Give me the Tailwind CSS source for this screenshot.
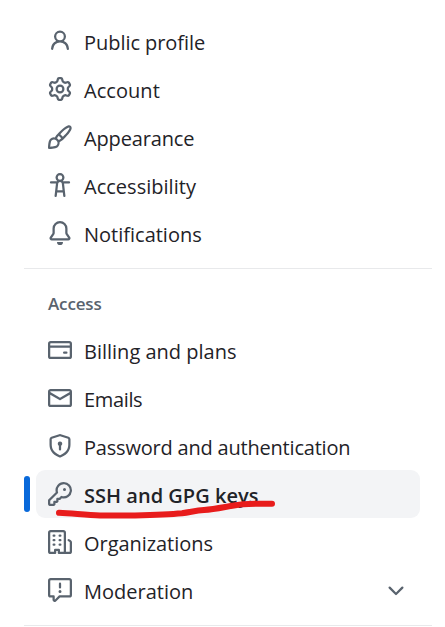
<!DOCTYPE html>
<html lang="en">
<head>
<meta charset="utf-8">
<title>Settings</title>
<script src="https://cdn.jsdelivr.net/npm/@tailwindcss/browser@4"></script>
</head>
<body class="w-[445px] h-[627px] overflow-hidden bg-white font-['Open_Sans','Noto_Sans',sans-serif] text-[20px] leading-[30px] text-[#1f2328]">
<nav class="pt-[17px] pl-6 pr-[13px]">
  <ul class="ml-3 mr-3 whitespace-nowrap">
    <li class="flex h-12 items-center gap-3 px-3"><svg class="size-6 shrink-0 fill-[#59636e]" viewBox="0 0 16 16"><path d="M10.561 8.073a6 6 0 0 1 3.432 5.142.75.75 0 1 1-1.498.07 4.5 4.5 0 0 0-8.99 0 .75.75 0 0 1-1.498-.07 6.004 6.004 0 0 1 3.431-5.142 3.999 3.999 0 1 1 5.123 0ZM10.5 5a2.5 2.5 0 1 0-5 0 2.5 2.5 0 0 0 5 0Z"/></svg><span class="pt-1 tracking-[-0.05px]">Public profile</span></li>
    <li class="flex h-12 items-center gap-3 px-3"><svg class="size-6 shrink-0 fill-[#59636e]" viewBox="0 0 16 16"><path d="M8 0a8.2 8.2 0 0 1 .701.031C9.444.095 9.99.645 10.16 1.29l.288 1.107c.018.066.079.158.212.224.231.114.454.243.668.386.123.082.233.09.299.071l1.103-.303c.644-.176 1.392.021 1.82.63.27.385.506.792.704 1.218.315.675.111 1.422-.364 1.891l-.814.806c-.049.048-.098.147-.088.294.016.257.016.515 0 .772-.01.147.038.246.088.294l.814.806c.475.469.679 1.216.364 1.891a7.977 7.977 0 0 1-.704 1.217c-.428.61-1.176.807-1.82.63l-1.102-.302c-.067-.019-.177-.011-.3.071a5.909 5.909 0 0 1-.668.386c-.133.066-.194.158-.211.224l-.29 1.106c-.168.646-.715 1.196-1.458 1.26a8.006 8.006 0 0 1-1.402 0c-.743-.064-1.289-.614-1.458-1.26l-.289-1.106c-.018-.066-.079-.158-.212-.224a5.738 5.738 0 0 1-.668-.386c-.123-.082-.233-.09-.299-.071l-1.103.303c-.644.176-1.392-.021-1.82-.63a8.12 8.12 0 0 1-.704-1.218c-.315-.675-.111-1.422.363-1.891l.815-.806c.05-.048.098-.147.088-.294a6.214 6.214 0 0 1 0-.772c.01-.147-.038-.246-.088-.294l-.815-.806C.635 6.045.431 5.298.746 4.623a7.92 7.92 0 0 1 .704-1.217c.428-.61 1.176-.807 1.82-.63l1.102.302c.067.019.177.011.3-.071.214-.143.437-.272.668-.386.133-.066.194-.158.211-.224l.29-1.106C6.009.645 6.556.095 7.299.03 7.53.01 7.764 0 8 0Zm-.571 1.525c-.036.003-.108.036-.137.146l-.289 1.105c-.147.561-.549.967-.998 1.189-.173.086-.34.183-.5.29-.417.278-.97.423-1.529.27l-1.103-.303c-.109-.03-.175.016-.195.045-.22.312-.412.644-.573.99-.014.031-.021.11.059.19l.815.806c.411.406.562.957.53 1.456a4.709 4.709 0 0 0 0 .582c.032.499-.119 1.05-.53 1.456l-.815.806c-.081.08-.073.159-.059.19.162.346.353.677.573.989.02.03.085.076.195.046l1.102-.303c.56-.153 1.113-.008 1.53.27.161.107.328.204.501.29.447.222.85.629.997 1.189l.289 1.105c.029.109.101.143.137.146a6.6 6.6 0 0 0 1.142 0c.036-.003.108-.036.137-.146l.289-1.105c.147-.561.549-.967.998-1.189.173-.086.34-.183.5-.29.417-.278.97-.423 1.529-.27l1.103.303c.109.029.175-.016.195-.045.22-.313.411-.644.573-.99.014-.031.021-.11-.059-.19l-.815-.806c-.411-.406-.562-.957-.53-1.456a4.709 4.709 0 0 0 0-.582c-.032-.499.119-1.05.53-1.456l.815-.806c.081-.08.073-.159.059-.19a6.464 6.464 0 0 0-.573-.989c-.02-.03-.085-.076-.195-.046l-1.102.303c-.56.153-1.113.008-1.53-.27a4.44 4.44 0 0 0-.501-.29c-.447-.222-.85-.629-.997-1.189l-.289-1.105c-.029-.11-.101-.143-.137-.146a6.6 6.6 0 0 0-1.142 0ZM11 8a3 3 0 1 1-6 0 3 3 0 0 1 6 0ZM9.5 8a1.5 1.5 0 1 0-3.001.001A1.5 1.5 0 0 0 9.5 8Z"/></svg><span class="pt-1 tracking-[0.05px]">Account</span></li>
    <li class="flex h-12 items-center gap-3 px-3"><svg class="size-6 shrink-0 fill-[#59636e]" viewBox="0 0 16 16"><path d="M11.134 1.535c.7-.509 1.416-.942 2.076-1.155.649-.21 1.463-.267 2.069.34.603.601.568 1.411.368 2.07-.202.668-.624 1.39-1.125 2.096-1.011 1.424-2.496 2.987-3.775 4.249-1.098 1.084-2.132 1.839-3.04 2.3a3.744 3.744 0 0 1-1.055 3.217c-.431.431-1.065.691-1.657.861-.614.177-1.294.287-1.914.357A21.151 21.151 0 0 1 .797 16H.743l.007-.75H.749L.742 16a.75.75 0 0 1-.743-.742l.743-.008-.742.007v-.054a21.25 21.25 0 0 1 .13-2.284c.067-.647.187-1.287.358-1.914.17-.591.43-1.226.86-1.657a3.746 3.746 0 0 1 3.227-1.054c.466-.893 1.225-1.907 2.314-2.982 1.271-1.255 2.833-2.75 4.245-3.777ZM1.62 13.089c-.051.464-.086.929-.104 1.395.466-.018.932-.053 1.396-.104a10.511 10.511 0 0 0 1.668-.309c.526-.151.856-.325 1.011-.48a2.25 2.25 0 1 0-3.182-3.182c-.155.155-.329.485-.48 1.01a10.515 10.515 0 0 0-.309 1.67Zm10.396-10.34c-1.224.89-2.605 2.189-3.822 3.384l1.718 1.718c1.21-1.205 2.51-2.597 3.387-3.833.47-.662.78-1.227.912-1.662.134-.444.032-.551.009-.575h-.001V1.78c-.014-.014-.113-.113-.548.027-.432.14-.995.462-1.655.942Zm-4.832 7.266-.001.001a9.859 9.859 0 0 0 1.63-1.142L7.155 7.216a9.7 9.7 0 0 0-1.161 1.607c.482.302.889.71 1.19 1.192Z"/></svg><span class="pt-1 tracking-[-0.15px]">Appearance</span></li>
    <li class="flex h-12 items-center gap-3 px-3"><svg class="size-6 shrink-0 fill-[#59636e]" viewBox="0 0 16 16"><path d="M9.923 5.302c.063.063.122.129.178.198H14A.75.75 0 0 1 14 7h-3.3l.578 5.163.362 2.997a.75.75 0 0 1-1.49.18L9.868 13H6.132l-.282 2.34a.75.75 0 0 1-1.49-.18l.362-2.997L5.3 7H2a.75.75 0 0 1 0-1.5h3.9a2.54 2.54 0 0 1 .176-.198 3 3 0 1 1 3.847 0ZM9.2 7.073h-.001a1.206 1.206 0 0 0-2.398 0L6.305 11.5h3.39ZM9.5 3a1.5 1.5 0 1 0-3.001.001A1.5 1.5 0 0 0 9.5 3Z"/></svg><span class="pt-1 tracking-[0.02px]">Accessibility</span></li>
    <li class="flex h-12 items-center gap-3 px-3"><svg class="size-6 shrink-0 fill-[#59636e]" viewBox="0 0 16 16"><path d="M8 16a2 2 0 0 0 1.985-1.75c.017-.137-.097-.25-.235-.25h-3.5c-.138 0-.252.113-.235.25A2 2 0 0 0 8 16ZM3 5a5 5 0 0 1 10 0v2.947c0 .05.015.098.042.139l1.703 2.555A1.519 1.519 0 0 1 13.482 13H2.518a1.516 1.516 0 0 1-1.263-2.36l1.703-2.554A.255.255 0 0 0 3 7.947Zm5-3.5A3.5 3.5 0 0 0 4.5 5v2.947c0 .346-.102.683-.294.97l-1.703 2.556a.017.017 0 0 0-.003.01l.001.006c0 .002.002.004.004.006l.006.004.007.001h10.964l.007-.001.006-.004.004-.006.001-.007a.017.017 0 0 0-.003-.01l-1.703-2.554a1.745 1.745 0 0 1-.294-.97V5A3.5 3.5 0 0 0 8 1.5Z"/></svg><span class="pt-1 tracking-[0px]">Notifications</span></li>
  </ul>
  <hr class="mt-[11px] border-0 h-px bg-[#e8e9eb]">
  <h2 class="mt-[23px] mb-[10px] ml-6 h-6 text-[17px] leading-6 font-semibold tracking-[-0.15px] text-[#59636e]">Access</h2>
  <ul class="ml-3 mr-3 whitespace-nowrap">
    <li class="flex h-12 items-center gap-3 px-3"><svg class="size-6 shrink-0 fill-[#59636e]" viewBox="0 0 16 16"><path d="M10.75 9a.75.75 0 0 0 0 1.5h1.5a.75.75 0 0 0 0-1.5h-1.5Z"/><path d="M0 3.75C0 2.784.784 2 1.75 2h12.5c.966 0 1.75.784 1.75 1.75v8.5A1.75 1.75 0 0 1 14.25 14H1.75A1.75 1.75 0 0 1 0 12.25ZM14.5 6.5h-13v5.75c0 .138.112.25.25.25h12.5a.25.25 0 0 0 .25-.25Zm0-2.75a.25.25 0 0 0-.25-.25H1.75a.25.25 0 0 0-.25.25V5h13Z"/></svg><span class="pt-1 tracking-[0px]">Billing and plans</span></li>
    <li class="flex h-12 items-center gap-3 px-3"><svg class="size-6 shrink-0 fill-[#59636e]" viewBox="0 0 16 16"><path d="M1.75 2h12.5c.966 0 1.75.784 1.75 1.75v8.5A1.75 1.75 0 0 1 14.25 14H1.75A1.75 1.75 0 0 1 0 12.25v-8.5C0 2.784.784 2 1.75 2ZM1.5 12.251c0 .138.112.25.25.25h12.5a.25.25 0 0 0 .25-.25V5.809L8.38 9.397a.75.75 0 0 1-.76 0L1.5 5.809v6.442Zm13-8.181v-.32a.25.25 0 0 0-.25-.25H1.75a.25.25 0 0 0-.25.25v.32L8 7.88Z"/></svg><span class="pt-1 tracking-[-0.35px]">Emails</span></li>
    <li class="flex h-12 items-center gap-3 px-3"><svg class="size-6 shrink-0 fill-[#59636e]" viewBox="0 0 16 16"><path d="m8.533.133 5.25 1.68A1.75 1.75 0 0 1 15 3.48V7c0 1.566-.32 3.182-1.303 4.682-.983 1.498-2.585 2.813-5.032 3.855a1.697 1.697 0 0 1-1.33 0c-2.447-1.042-4.049-2.357-5.032-3.855C1.32 10.182 1 8.566 1 7V3.48a1.755 1.755 0 0 1 1.217-1.667l5.25-1.68a1.748 1.748 0 0 1 1.066 0Zm-.61 1.429.001.001-5.25 1.68a.251.251 0 0 0-.174.237V7c0 1.36.275 2.666 1.057 3.859.784 1.194 2.121 2.342 4.366 3.298a.196.196 0 0 0 .154 0c2.245-.957 3.582-2.103 4.366-3.297C13.225 9.666 13.5 8.358 13.5 7V3.48a.25.25 0 0 0-.174-.238l-5.25-1.68a.25.25 0 0 0-.153 0ZM9.5 6.5c0 .536-.286 1.032-.75 1.3v2.45a.75.75 0 0 1-1.5 0V7.8A1.5 1.5 0 1 1 9.5 6.5Z"/></svg><span class="pt-1 tracking-[-0.2px]">Password and authentication</span></li>
    <li class="relative flex h-12 items-center gap-3 rounded-[9px] bg-[#f3f4f6] px-3">
      <span class="absolute -left-3 top-[6px] h-9 w-[6px] rounded-[3px] bg-[#0969da]"></span>
      <svg class="size-6 shrink-0 fill-[#59636e]" viewBox="0 0 16 16"><path d="M10.5 0a5.499 5.499 0 1 1-1.288 10.848l-.932.932a.749.749 0 0 1-.53.22H7v.75a.749.749 0 0 1-.22.53l-.5.5a.749.749 0 0 1-.53.22H5v.75a.749.749 0 0 1-.22.53l-.5.5a.749.749 0 0 1-.53.22h-2A1.75 1.75 0 0 1 0 14.25v-2c0-.199.079-.389.22-.53l4.932-4.932A5.5 5.5 0 0 1 10.5 0Zm-4 5.5c-.001.431.069.86.205 1.269a.75.75 0 0 1-.181.768L1.5 12.56v1.69c0 .138.112.25.25.25h1.69l.06-.06v-1.19a.75.75 0 0 1 .75-.75h1.19l.06-.06v-1.19a.75.75 0 0 1 .75-.75h1.19l1.023-1.025a.75.75 0 0 1 .768-.18A4 4 0 1 0 6.5 5.5ZM11 6a1 1 0 1 1 0-2 1 1 0 0 1 0 2Z"/></svg><span class="pt-1 font-semibold tracking-[0.02px]">SSH and GPG keys</span>
      <svg class="absolute left-4 top-7 h-6 w-[228px] fill-none stroke-[#e81c1c] stroke-[6]" viewBox="52 498 228 24" stroke-linecap="round" stroke-linejoin="round"><path d="M59 512.8 C75 513.6 87 515.3 100 515.4 H135 C151 515 167 514.6 182 513.2 C191 512 196 510.5 204 510 C218 509 230 505.5 243 504.3 C252 503.6 262 503.8 272 503.8"/></svg>
    </li>
    <li class="flex h-12 items-center gap-3 px-3"><svg class="size-6 shrink-0 fill-[#59636e]" viewBox="0 0 16 16"><path d="M1.75 16A1.75 1.75 0 0 1 0 14.25V1.75C0 .784.784 0 1.75 0h8.5C11.216 0 12 .784 12 1.75v12.5c0 .085-.006.168-.018.25h2.268a.25.25 0 0 0 .25-.25V8.285a.25.25 0 0 0-.111-.208l-1.055-.703a.749.749 0 1 1 .832-1.248l1.055.703c.487.325.779.871.779 1.456v5.965A1.75 1.75 0 0 1 14.25 16h-3.5a.766.766 0 0 1-.197-.026c-.099.017-.2.026-.303.026h-3a.75.75 0 0 1-.75-.75V14h-1v1.25a.75.75 0 0 1-.75.75Zm-.25-1.75c0 .138.112.25.25.25H4v-1.25a.75.75 0 0 1 .75-.75h2.5a.75.75 0 0 1 .75.75v1.25h2.25a.25.25 0 0 0 .25-.25V1.75a.25.25 0 0 0-.25-.25h-8.5a.25.25 0 0 0-.25.25ZM3.75 6h.5a.75.75 0 0 1 0 1.5h-.5a.75.75 0 0 1 0-1.5ZM3 3.75A.75.75 0 0 1 3.75 3h.5a.75.75 0 0 1 0 1.5h-.5A.75.75 0 0 1 3 3.75Zm4 3A.75.75 0 0 1 7.75 6h.5a.75.75 0 0 1 0 1.5h-.5A.75.75 0 0 1 7 6.75ZM7.75 3h.5a.75.75 0 0 1 0 1.5h-.5a.75.75 0 0 1 0-1.5ZM3 9.75A.75.75 0 0 1 3.75 9h.5a.75.75 0 0 1 0 1.5h-.5A.75.75 0 0 1 3 9.75ZM7.75 9h.5a.75.75 0 0 1 0 1.5h-.5a.75.75 0 0 1 0-1.5Z"/></svg><span class="pt-1 tracking-[-0.05px]">Organizations</span></li>
    <li class="flex h-12 items-center gap-3 px-3"><svg class="size-6 shrink-0 fill-[#59636e]" viewBox="0 0 16 16"><path d="M0 1.75C0 .784.784 0 1.75 0h12.5C15.216 0 16 .784 16 1.75v9.5A1.75 1.75 0 0 1 14.25 13H8.06l-2.573 2.573A1.458 1.458 0 0 1 3 14.543V13H1.75A1.75 1.75 0 0 1 0 11.25Zm1.75-.25a.25.25 0 0 0-.25.25v9.5c0 .138.112.25.25.25h2a.75.75 0 0 1 .75.75v2.19l2.72-2.72a.749.749 0 0 1 .53-.22h6.5a.25.25 0 0 0 .25-.25v-9.5a.25.25 0 0 0-.25-.25Zm7 2.25v2.5a.75.75 0 0 1-1.5 0v-2.5a.75.75 0 0 1 1.5 0ZM9 9a1 1 0 1 1-2 0 1 1 0 0 1 2 0Z"/></svg><span class="pt-1 grow tracking-[0px]">Moderation</span><svg class="mt-[2px] size-6 shrink-0 fill-[#59636e]" viewBox="0 0 16 16"><path d="M12.78 5.22a.749.749 0 0 1 0 1.06l-4.25 4.25a.749.749 0 0 1-1.06 0L3.22 6.28a.749.749 0 1 1 1.06-1.06L8 8.939l3.72-3.719a.749.749 0 0 1 1.06 0Z"/></svg></li>
  </ul>
  <hr class="mt-[11px] border-0 h-px bg-[#e8e9eb]">
</nav>
</body>
</html>
